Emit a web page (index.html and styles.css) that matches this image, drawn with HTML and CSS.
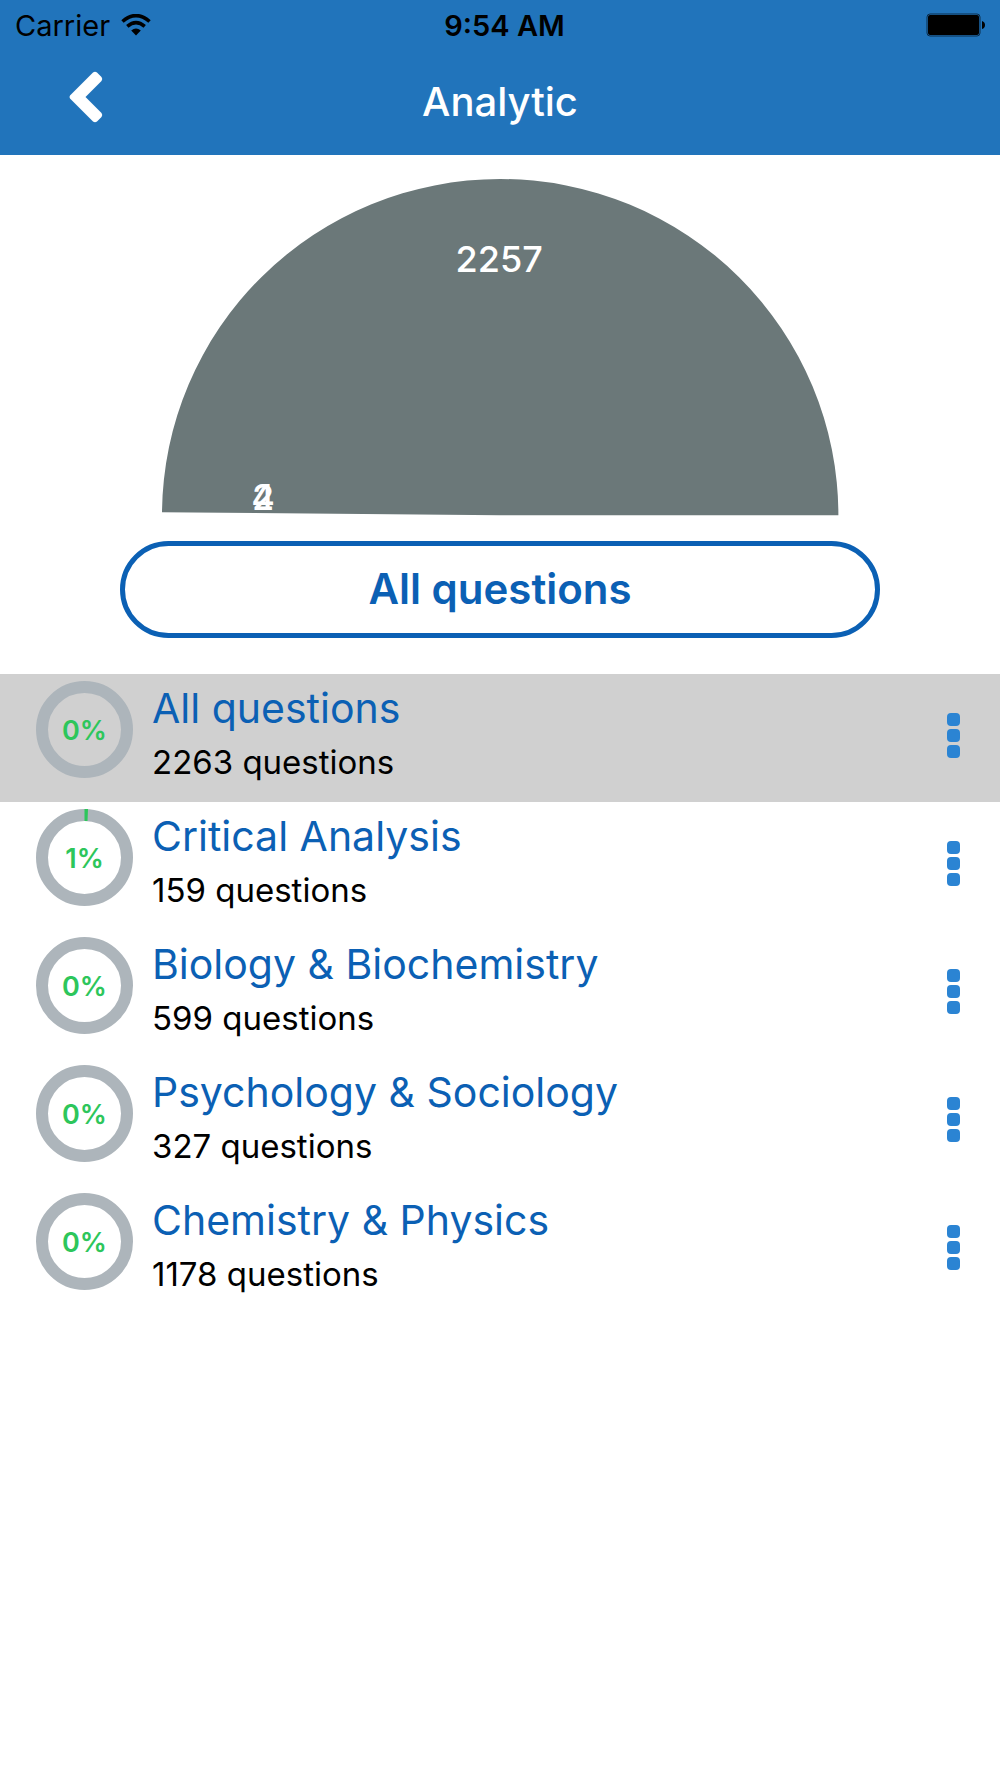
FILE: index.html
```html
<!DOCTYPE html>
<html lang="en">
<head>
    <meta charset="UTF-8">
    <meta name="viewport" content="width=device-width, initial-scale=1.0">
    <title>Analytic</title>
    <link rel="stylesheet" href="styles.css">
</head>
<body>
    <header class="header">
        <div class="status-bar">
            <div class="carrier">
                <span>Carrier</span>
                <svg class="wifi" viewBox="0 0 30 22" width="30" height="22" aria-hidden="true">
                    <path d="M1.5 7.5 Q15 -4.3 28.5 7.5" fill="none" stroke="#000" stroke-width="3.6"/>
                    <path d="M6.3 12.3 Q15 4.8 23.7 12.3" fill="none" stroke="#000" stroke-width="3.6"/>
                    <path d="M10.2 16.6 Q15 12.3 19.8 16.6 L15 21.5 Z" fill="#000"/>
                </svg>
            </div>
            <span class="time">9:54 AM</span>
            <svg class="battery" viewBox="0 0 60 24" width="60" height="24" aria-hidden="true">
                <rect x="1" y="1" width="53" height="22" rx="3" fill="none" stroke="#0b2c4a" stroke-width="1"/>
                <rect x="2" y="2" width="51" height="20" rx="2" fill="#000"/>
                <path d="M56 8 Q59 9 59 12 Q59 15 56 16 Z" fill="#000"/>
            </svg>
        </div>
        <div class="nav-bar">
            <button class="back" type="button" aria-label="Back">
                <svg viewBox="0 0 34 52" width="34" height="52" aria-hidden="true">
                    <path d="M24 1.5 Q26 0 28 1.5 L32.5 6 Q34 8 32.5 10 L16.5 26 L32.5 42 Q34 44 32.5 46 L28 50.5 Q26 52 24 50.5 L1 27.5 Q0 26 1 24.5 Z" fill="#fff"/>
                </svg>
            </button>
            <h1>Analytic</h1>
        </div>
    </header>

    <main>
        <section class="summary">
            <!-- half pie: unanswered, correct, wrong -->
            <svg class="chart" viewBox="0 0 676 336" role="img" aria-label="Question statistics">
                <path d="M338 336 L0 333 A338 336 0 0 1 338 0 A338 336 0 0 1 676 336 Z" fill="#6b7879"/>
                <text x="337" y="93">2257</text>
                <text x="101" y="331">2</text>
                <text x="101" y="331">4</text>
            </svg>
            <button class="filter" type="button">All questions</button>
        </section>

        <ul class="topics">
            <li class="topic selected">
                <svg class="ring" viewBox="0 0 97 97" width="97" height="97">
                    <circle class="track" cx="48.5" cy="48.5" r="42.5"/>
                    <text x="48.5" y="59">0%</text>
                </svg>
                <div class="info">
                    <a href="#all">All questions</a>
                    <p>2263 questions</p>
                </div>
                <button class="more" type="button" aria-label="More"><i></i><i></i><i></i></button>
            </li>
            <li class="topic">
                <svg class="ring" viewBox="0 0 97 97" width="97" height="97">
                    <circle class="track" cx="48.5" cy="48.5" r="42.5"/>
                    <path d="M48.5 0 H52 L51.5 12 H48.5 Z" fill="#2dc65b"/>
                    <text x="48.5" y="59">1%</text>
                </svg>
                <div class="info">
                    <a href="#critical">Critical Analysis</a>
                    <p>159 questions</p>
                </div>
                <button class="more" type="button" aria-label="More"><i></i><i></i><i></i></button>
            </li>
            <li class="topic">
                <svg class="ring" viewBox="0 0 97 97" width="97" height="97">
                    <circle class="track" cx="48.5" cy="48.5" r="42.5"/>
                    <text x="48.5" y="59">0%</text>
                </svg>
                <div class="info">
                    <a href="#biology">Biology &amp; Biochemistry</a>
                    <p>599 questions</p>
                </div>
                <button class="more" type="button" aria-label="More"><i></i><i></i><i></i></button>
            </li>
            <li class="topic">
                <svg class="ring" viewBox="0 0 97 97" width="97" height="97">
                    <circle class="track" cx="48.5" cy="48.5" r="42.5"/>
                    <text x="48.5" y="59">0%</text>
                </svg>
                <div class="info">
                    <a href="#psychology">Psychology &amp; Sociology</a>
                    <p>327 questions</p>
                </div>
                <button class="more" type="button" aria-label="More"><i></i><i></i><i></i></button>
            </li>
            <li class="topic">
                <svg class="ring" viewBox="0 0 97 97" width="97" height="97">
                    <circle class="track" cx="48.5" cy="48.5" r="42.5"/>
                    <text x="48.5" y="59">0%</text>
                </svg>
                <div class="info">
                    <a href="#chemistry">Chemistry &amp; Physics</a>
                    <p>1178 questions</p>
                </div>
                <button class="more" type="button" aria-label="More"><i></i><i></i><i></i></button>
            </li>
        </ul>
    </main>
</body>
</html>
```
FILE: styles.css
```css
* {
    box-sizing: border-box;
}
body {
    margin: 0;
    background: #fff;
    color: #000;
    font-family: Inter, "Liberation Sans", sans-serif;
}
button {
    padding: 0;
    border: 0;
    background: none;
    font-family: inherit;
    cursor: pointer;
}
.header {
    background: #2174bb;
}
.status-bar {
    display: grid;
    grid-template-columns: 1fr auto 1fr;
    align-items: center;
    padding: 0 6px 0 15px;
    height: 50px;
    font-size: 29px;
}
.carrier {
    display: flex;
    align-items: center;
    gap: 11px;
}
.time {
    font-weight: 600;
}
.battery {
    justify-self: end;
    margin-right: 8px;
}
.nav-bar {
    display: grid;
    grid-template-columns: 1fr auto 1fr;
    align-items: center;
    height: 105px;
    padding: 0 69px 2px;
}
.back {
    justify-self: start;
    padding-bottom: 10px;
}
.back svg {
    display: block;
}
h1 {
    margin: 0;
    color: #fff;
    font-size: 40px;
    font-weight: 500;
}
.summary {
    display: flex;
    flex-direction: column;
    align-items: center;
    gap: 26px;
    padding: 24px 12% 36px;
}
.chart {
    display: block;
    width: 89%;
    overflow: visible;
}
.chart text {
    fill: #fff;
    font-size: 36px;
    font-weight: 500;
    text-anchor: middle;
}
.filter {
    width: 100%;
    height: 97px;
    padding-bottom: 2px;
    border: 5px solid #0b60b4;
    border-radius: 49px;
    color: #0b60b4;
    font-size: 42px;
    font-weight: 600;
}
.topics {
    margin: 0;
    padding: 0;
    list-style: none;
}
.topic {
    display: flex;
    align-items: flex-start;
    gap: 19px;
    height: 128px;
    padding: 7px 36px 0;
}
.selected {
    background: #d0d0d0;
}
.ring {
    flex: none;
}
.track {
    fill: none;
    stroke: #adb5bb;
    stroke-width: 12px;
}
.ring text {
    fill: #2dc65b;
    font-size: 27px;
    font-weight: 600;
    text-anchor: middle;
}
.info {
    flex: 1;
}
.info a {
    display: block;
    color: #0b60b4;
    font-size: 41px;
    line-height: 54px;
    text-decoration: none;
}
.info p {
    margin: 3px 0 0;
    font-size: 33px;
    line-height: 48px;
}
.more {
    display: flex;
    flex-direction: column;
    gap: 3px;
    padding: 32px 4px;
}
.more i {
    width: 13px;
    height: 13px;
    border-radius: 4px;
    background: #2b84d3;
}
```
